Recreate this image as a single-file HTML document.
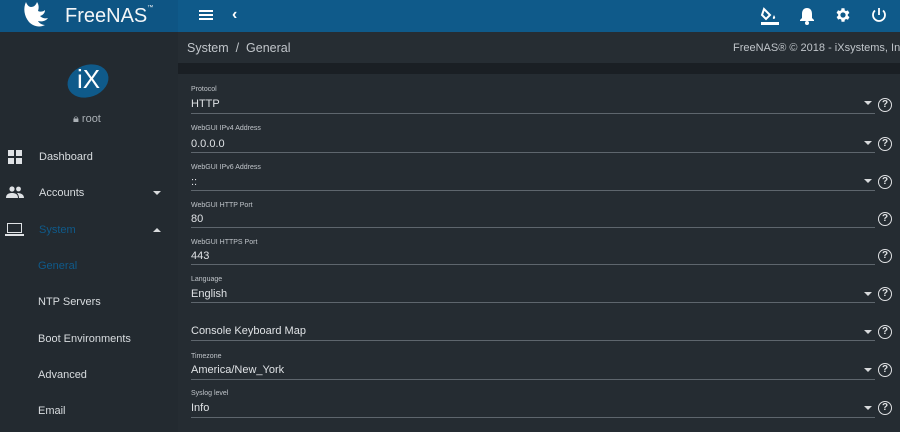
<!DOCTYPE html>
<html><head><style>
*{margin:0;padding:0;box-sizing:border-box}
body{width:900px;height:432px;overflow:hidden;background:#242b31;font-family:"Liberation Sans",sans-serif;position:relative}
.a{position:absolute}
#top{left:0;top:0;width:900px;height:32px;background:#0f5a8a}
#logo{left:0;top:0;width:178px;height:32px;background:#0e5584}
#side{left:0;top:32px;width:178px;height:400px;background:#232a30}
#bc{left:178px;top:32px;width:722px;height:31px;background:#262d33}
#strip{left:178px;top:63px;width:722px;height:11px;background:#1a1f24}
#card{left:178px;top:74px;width:722px;height:358px;background:#252c32}
.nav{color:#d8dcdf;font-size:11px}
.lbl{color:#c0c5ca;font-size:7px;left:191px}
.val{color:#dfe2e5;font-size:11px;left:191px}
.ul{left:191px;width:684px;height:1px;background:#5e666d}
.car{left:864px;width:0;height:0;border-left:4px solid transparent;border-right:4px solid transparent;border-top:4px solid #d8dadc}
.q{left:878px;width:14px;height:14px;border:1.5px solid #e0e2e4;border-radius:50%;color:#e0e2e4;font-size:10px;font-weight:bold;text-align:center;line-height:11px}
</style></head><body>
<div class="a" id="top"></div><div class="a" id="logo"></div>
<svg class="a" style="left:20px;top:0" width="40" height="30" viewBox="0 0 40 30"><path d="M6 2c-3 6-2 14 3 20 4 4 10 6 16 3-3 0-6-2-7-4 4 1 8 0 10-3-3 1-6 0-8-2 3-1 5-3 5-6-2 2-5 2-7 1 1-3 1-6-1-9-1 3-3 5-6 5-2 0-4-2-5-5z" fill="#fff"/></svg>
<div class="a" style="left:65px;top:5px;color:#f4f6f8;font-size:20px">FreeNAS<span style="font-size:6px;vertical-align:top">™</span></div>
<div class="a" style="left:199px;top:10px;width:14px;height:2px;background:#fff;box-shadow:0 4px #fff,0 8px #fff"></div>
<div class="a" style="left:232px;top:6px;color:#fff;font-size:16px;font-weight:bold">‹</div>
<svg class="a" style="left:760px;top:6px" width="20" height="20" viewBox="0 0 20 20"><path d="M4 3l6 6-4 4-4-4z" fill="none" stroke="#fff" stroke-width="2"/><path d="M14 9c1 2 2 3 0 4-2 0-1-2 0-4z" fill="#fff"/><rect x="1" y="16" width="18" height="3" fill="#fff"/></svg>
<svg class="a" style="left:798px;top:6px" width="18" height="20" viewBox="0 0 18 20"><path d="M9 2c3 0 5 2 5 6v4l2 2v1H2v-1l2-2V8c0-4 2-6 5-6z" fill="#fff"/><circle cx="9" cy="17" r="2" fill="#fff"/></svg>
<svg class="a" style="left:834px;top:6px" width="18" height="18" viewBox="0 0 24 24"><path fill="#fff" d="M19.4 13a7.5 7.5 0 000-2l2.1-1.6-2-3.5-2.5 1a7 7 0 00-1.7-1L15 3h-4l-.4 2.6a7 7 0 00-1.7 1l-2.5-1-2 3.5L6.6 11a7.5 7.5 0 000 2l-2.1 1.6 2 3.5 2.5-1a7 7 0 001.7 1L11 21h4l.4-2.6a7 7 0 001.7-1l2.5 1 2-3.5zM13 15.5a3.5 3.5 0 110-7 3.5 3.5 0 010 7z" transform="translate(-1 0)"/></svg>
<svg class="a" style="left:870px;top:6px" width="18" height="18" viewBox="0 0 18 18"><path d="M9 2v7M5 4.5a6 6 0 108 0" fill="none" stroke="#fff" stroke-width="1.8"/></svg>
<div class="a" id="side"></div>
<div class="a" style="left:67px;top:65px;width:42px;height:32px;background:#0f5a8a;border-radius:50%;transform:rotate(-20deg)"></div>
<div class="a" style="left:77px;top:64px;color:#fff;font-size:26px">iX</div>
<div class="a" style="left:73px;top:113px;color:#aab0b5;font-size:11px">🔒︎ root</div>
<div class="a" style="left:8px;top:150px;width:6px;height:6px;background:#dfe2e5;box-shadow:8px 0 #dfe2e5,0 8px #dfe2e5,8px 8px #dfe2e5"></div>
<div class="a nav" style="left:39px;top:151px">Dashboard</div>
<svg class="a" style="left:6px;top:186px" width="18" height="12" viewBox="0 0 18 12"><circle cx="6" cy="3" r="2.6" fill="#dfe2e5"/><circle cx="12.5" cy="3" r="2.4" fill="#dfe2e5"/><path d="M0 12c0-4 3-5 6-5s6 1 6 5z M11 7c3 0 7 1 7 5h-5c0-2-1-4-2-5z" fill="#dfe2e5"/></svg>
<div class="a nav" style="left:39px;top:187px">Accounts</div>
<div class="a car" style="left:153px;top:191px"></div>
<div class="a" style="left:7px;top:223px;width:15px;height:10px;border:1.5px solid #dfe2e5"></div>
<div class="a" style="left:5px;top:234px;width:19px;height:1.5px;background:#dfe2e5"></div>
<div class="a nav" style="left:39px;top:224px;color:#0f5a8a">System</div>
<div class="a" style="left:153px;top:228px;border-left:4px solid transparent;border-right:4px solid transparent;border-bottom:4px solid #d8dadc"></div>
<div class="a nav" style="left:38px;top:260px;color:#0f5a8a">General</div>
<div class="a nav" style="left:38px;top:296px">NTP Servers</div>
<div class="a nav" style="left:38px;top:333px">Boot Environments</div>
<div class="a nav" style="left:38px;top:369px">Advanced</div>
<div class="a nav" style="left:38px;top:405px">Email</div>
<div class="a" id="bc"></div><div class="a" id="strip"></div><div class="a" id="card"></div>
<div class="a" style="left:187px;top:41px;color:#c0c5ca;font-size:12.5px">System &nbsp;/&nbsp; General</div>
<div class="a" style="left:733px;top:42px;color:#c0c5ca;font-size:11px;white-space:nowrap">FreeNAS® © 2018 - iXsystems, Inc</div>

<div class="a lbl" style="top:86px">Protocol</div><div class="a val" style="top:98px">HTTP</div><div class="a ul" style="top:113px"></div><div class="a car" style="top:101px"></div><div class="a q" style="top:98px">?</div>
<div class="a lbl" style="top:125px">WebGUI IPv4 Address</div><div class="a val" style="top:138px">0.0.0.0</div><div class="a ul" style="top:152px"></div><div class="a car" style="top:141px"></div><div class="a q" style="top:137px">?</div>
<div class="a lbl" style="top:164px">WebGUI IPv6 Address</div><div class="a val" style="top:176px">::</div><div class="a ul" style="top:190px"></div><div class="a car" style="top:179px"></div><div class="a q" style="top:175px">?</div>
<div class="a lbl" style="top:202px">WebGUI HTTP Port</div><div class="a val" style="top:213px">80</div><div class="a ul" style="top:227px"></div><div class="a q" style="top:212px">?</div>
<div class="a lbl" style="top:239px">WebGUI HTTPS Port</div><div class="a val" style="top:250px">443</div><div class="a ul" style="top:264px"></div><div class="a q" style="top:249px">?</div>
<div class="a lbl" style="top:276px">Language</div><div class="a val" style="top:288px">English</div><div class="a ul" style="top:302px"></div><div class="a car" style="top:292px"></div><div class="a q" style="top:287px">?</div>
<div class="a val" style="top:325px">Console Keyboard Map</div><div class="a ul" style="top:340px"></div><div class="a car" style="top:330px"></div><div class="a q" style="top:325px">?</div>
<div class="a lbl" style="top:353px">Timezone</div><div class="a val" style="top:364px">America/New_York</div><div class="a ul" style="top:379px"></div><div class="a car" style="top:368px"></div><div class="a q" style="top:363px">?</div>
<div class="a lbl" style="top:390px">Syslog level</div><div class="a val" style="top:402px">Info</div><div class="a ul" style="top:417px"></div><div class="a car" style="top:406px"></div><div class="a q" style="top:401px">?</div>
</body></html>
